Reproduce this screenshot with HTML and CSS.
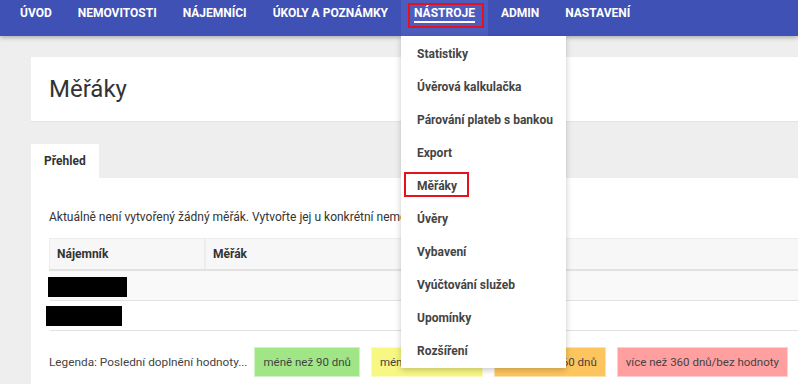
FILE: index.html
```html
<!doctype html>
<html lang="cs">
<head>
    <meta charset="UTF-8">
    <title>Měřáky</title>
    <link rel="stylesheet" href="styles.css">
</head>
<body>
    <div class="nav">
        <ul class="menu">
            <li><a href="#">Úvod</a></li>
            <li><a href="#">Nemovitosti</a></li>
            <li><a href="#">Nájemníci</a></li>
            <li><a href="#">Úkoly a poznámky</a></li>
            <li class="active">
                <a href="#"><span>Nástroje</span></a>
                <ul class="drop">
                    <li><a href="#">Statistiky</a></li>
                    <li><a href="#">Úvěrová kalkulačka</a></li>
                    <li><a href="#">Párování plateb s bankou</a></li>
                    <li><a href="#">Export</a></li>
                    <li class="marked"><a href="#">Měřáky</a></li>
                    <li><a href="#">Úvěry</a></li>
                    <li><a href="#">Vybavení</a></li>
                    <li><a href="#">Vyúčtování služeb</a></li>
                    <li><a href="#">Upomínky</a></li>
                    <li><a href="#">Rozšíření</a></li>
                </ul>
            </li>
            <li><a href="#">Admin</a></li>
            <li><a href="#">Nastavení</a></li>
        </ul>
    </div>
    <div class="page">
        <div class="head">
            <h1>Měřáky</h1>
        </div>
        <ul class="tabs">
            <li>Přehled</li>
        </ul>
        <div class="panel">
            <p class="note">Aktuálně není vytvořený žádný měřák. Vytvořte jej u konkrétní nemovitosti.</p>
            <table class="list">
                <thead>
                    <tr><th class="first">Nájemník</th><th>Měřák</th></tr>
                </thead>
                <tbody>
                    <tr class="odd"><td><span class="hidden one"></span></td><td></td></tr>
                    <tr><td><span class="hidden two"></span></td><td></td></tr>
                </tbody>
            </table>
            <div class="legend">
                <span class="label">Legenda: Poslední doplnění hodnoty...</span>
                <span class="badge green">méně než 90 dnů</span>
                <span class="badge yellow">méně než 180 dnů</span>
                <span class="badge orange">méně než 360 dnů</span>
                <span class="badge red">více než 360 dnů/bez hodnoty</span>
            </div>
        </div>
    </div>
</body>
</html>
```

FILE: styles.css
```css
*{
    margin: 0;
    padding: 0;
}
html{
    background: #fff;
}
body{
    width: 798px;
    overflow: hidden;
    background: #eee;
    font-family: Roboto, "Liberation Sans", sans-serif;
    font-size: 12px;
    color: #333;
}
ul{
    list-style-type: none;
}
a{
    text-decoration: none;
    color: inherit;
}
.nav{
    position: relative;
    z-index: 2;
    height: 36px;
    background: #3f51b5;
    box-shadow: 0 2px 4px rgba(0,0,0,.25);
}
.nav .menu{
    display: flex;
    height: 36px;
    padding-left: 7px;
}
.nav .menu > li{
    position: relative;
}
.nav .menu > li > a{
    display: block;
    height: 30px;
    padding: 6px 13px 0;
    line-height: 14px;
    font-weight: bold;
    text-transform: uppercase;
    color: #fff;
}
.nav .menu > li.active{
    background: #4d5dbf;
}
.nav .menu > li.active > a span{
    display: inline-block;
    padding-bottom: 1px;
    border-bottom: 2px solid #fff;
}
.nav .menu > li.active::after{
    content: "";
    position: absolute;
    left: 7px;
    top: 3px;
    width: 72px;
    height: 21px;
    border: 2px solid #e5121b;
}
.drop{
    position: absolute;
    left: 0;
    top: 36px;
    width: 165px;
    padding-top: 2px;
    background: #fff;
    box-shadow: 0 2px 6px rgba(0,0,0,.22);
}
.drop li{
    position: relative;
    height: 33px;
}
.drop li a{
    display: block;
    padding-left: 16px;
    line-height: 33px;
    font-weight: bold;
    color: #444;
}
.drop li.marked::after{
    content: "";
    position: absolute;
    left: 3px;
    top: 2px;
    width: 61px;
    height: 21px;
    border: 2px solid #e5121b;
}
.page{
    padding: 21px 0 0 31px;
}
.head{
    height: 65px;
    padding-left: 18px;
    display: flex;
    align-items: center;
    background: #fff;
    border-bottom: 1px solid #e4e4e4;
    box-sizing: border-box;
}
.head h1{
    font-size: 24px;
    font-weight: normal;
    color: #333;
}
.tabs{
    display: flex;
    margin-top: 22px;
}
.tabs li{
    height: 34px;
    padding: 0 13px;
    line-height: 34px;
    font-weight: bold;
    background: #fff;
}
.panel{
    padding: 30px 0 7px 18px;
    background: #fff;
}
.note{
    line-height: 18px;
    white-space: nowrap;
}
.list{
    width: 100%;
    margin-top: 12px;
    border-collapse: collapse;
}
.list th{
    height: 30px;
    padding: 0 7px;
    text-align: left;
    background: #f7f7f7;
    border-top: 1px solid #ececec;
    border-left: 1px solid #ececec;
    border-bottom: 2px solid #e2e2e2;
}
.list th + th{
    border-left: 2px solid #ececec;
}
.list th.first{
    width: 140px;
}
.list td{
    height: 29px;
    padding: 0 7px;
    border-bottom: 1px solid #e2e2e2;
}
.list tr.odd td{
    background: #f9f9f9;
}
.hidden{
    display: block;
    height: 20px;
    background: #000;
}
.hidden.one{
    width: 79px;
    margin: 6px 0 3px -9px;
}
.hidden.two{
    width: 76px;
    margin: 4px 0 4px -11px;
}
.legend{
    display: flex;
    align-items: center;
    margin-top: 16px;
    font-size: 11.8px;
    white-space: nowrap;
}
.legend span{
    flex-shrink: 0;
}
.legend .label{
    margin-right: 7px;
    color: #444;
}
.badge{
    height: 28px;
    padding: 0 8px;
    margin-right: 11px;
    font-size: 11.5px;
    line-height: 28px;
    color: #444;
    border: 1px solid rgba(255,255,255,.5);
}
.green{
    background: #a0e686;
}
.yellow{
    background: #f7f783;
}
.orange{
    background: #fdc55d;
}
.red{
    background: #ff9f9f;
}
```
